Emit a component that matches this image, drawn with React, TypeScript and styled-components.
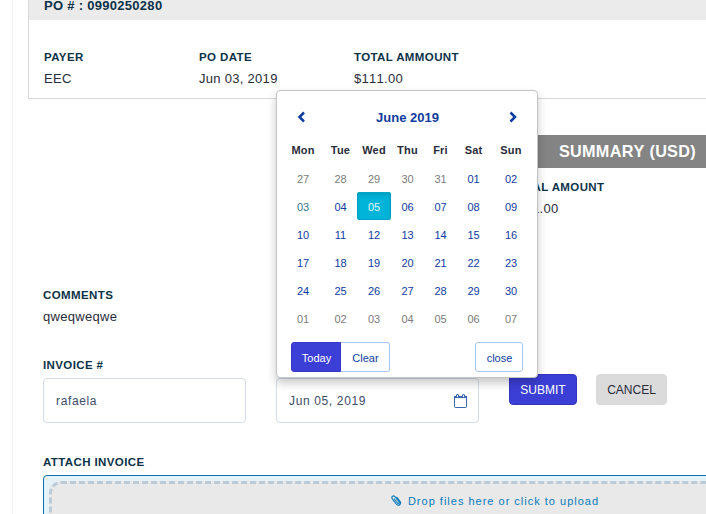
import React from 'react';
import styled, { createGlobalStyle } from 'styled-components';

const GlobalStyle = createGlobalStyle`
  * { box-sizing: border-box; }
  body {
    margin: 0;
    overflow: hidden;
    background: #fff;
    font-family: "Liberation Sans", Arial, sans-serif;
    font-size: 13px;
    color: #292b3a;
  }
  button, input { font-family: inherit; }
`;

const Page = styled.div`
  display: flex;
  width: 706px;
  height: 514px;
  overflow: hidden;
`;

const Gutter = styled.div`
  flex: 0 0 13px;
  border-right: 1px solid #f4f4f4;
  background: #fff;
`;

const Content = styled.main`
  flex: 0 0 950px;
  padding-left: 15px;
`;

const OrderPanel = styled.section`
  height: 99px;
  border: 1px solid #d9d9d9;
  border-top: 0;
`;

const OrderHeader = styled.header`
  height: 20px;
  padding-left: 15px;
  background: #ebebeb;
  color: #0c3249;
  font-size: 13px;
  font-weight: bold;
  line-height: 11px;
  letter-spacing: 0.29px;
`;

const OrderFields = styled.div`
  display: flex;
  padding: 29px 0 0 15px;
`;

const Field = styled.div<{ $width?: number }>`
  width: ${(p) => (p.$width ? `${p.$width}px` : 'auto')};
`;

const Label = styled.div`
  color: #0c3249;
  font-size: 11.5px;
  font-weight: bold;
  line-height: 16px;
  letter-spacing: 0.39px;
  white-space: nowrap;
`;

const Value = styled.div`
  margin-top: 5px;
  font-size: 13px;
  font-kerning: none;
  line-height: 17px;
  letter-spacing: 0.29px;
`;

const SummaryBlock = styled.section`
  height: 152px;
  margin: 36px 0 0 480px;
`;

const SummaryTitle = styled.h2`
  height: 33px;
  margin: 0 0 11px;
  padding-left: 51px;
  background: #848484;
  color: #fff;
  font-size: 16.25px;
  font-kerning: none;
  line-height: 33px;
  letter-spacing: 0.25px;
`;

const SummaryField = styled(Field)`
  padding-left: 1.5px;
`;

const Comments = styled.section`
  height: 70px;
  padding-left: 15px;
`;

const FormRow = styled.form`
  display: flex;
  gap: 30px;
  height: 97px;
  padding-left: 15px;
`;

const FormField = styled.div`
  position: relative;
  width: 203px;
`;

const InputBox = styled.div`
  display: flex;
  align-items: center;
  justify-content: space-between;
  height: 45px;
  margin-top: 5px;
  padding: 0 11px 0 12px;
  border: 1px solid #d3dce8;
  border-radius: 4px;
  background: #fff;
`;

const Input = styled.input`
  width: 130px;
  padding: 0;
  border: 0;
  outline: 0;
  background: transparent;
  color: #3e4b66;
  font-size: 12px;
  letter-spacing: 0.64px;
`;

const Actions = styled.div`
  display: flex;
  align-items: flex-start;
  gap: 19px;
  padding-top: 17px;
`;

const ActionButton = styled.button<{ $primary?: boolean }>`
  width: ${(p) => (p.$primary ? 68 : 71)}px;
  height: 31px;
  padding: 0;
  border: 1px solid ${(p) => (p.$primary ? '#3336bd' : '#d8d8d8')};
  border-radius: 4px;
  background: ${(p) => (p.$primary ? '#3b3fd5' : '#dbdbdb')};
  color: ${(p) => (p.$primary ? '#fff' : '#292b3a')};
  font-size: 12px;
`;

const Popup = styled.div`
  position: absolute;
  left: 0;
  bottom: 76px;
  z-index: 2;
  width: 262px;
  height: 288px;
  padding: 12px 5px 0;
  border: 1px solid #c4c4c4;
  border-radius: 4px;
  background: #fff;
  box-shadow: 0 5px 10px rgba(0, 0, 0, 0.22);
`;

const MonthBar = styled.div`
  display: flex;
  align-items: center;
  justify-content: space-between;
  height: 28px;
  padding: 0 14px 0 15px;
  color: #0f3ba1;
`;

const MonthName = styled.strong`
  font-size: 13px;
`;

const Days = styled.div`
  display: grid;
  grid-template-columns: 42px 33px 34px 33px 33px 33px 42px;
  padding-top: 5px;
  text-align: center;
`;

const Weekday = styled.div`
  height: 28px;
  font-size: 11px;
  font-weight: bold;
  line-height: 29px;
  letter-spacing: 0.2px;
`;

type DayKind = 'normal' | 'muted' | 'marked' | 'selected';

const dayColor: Record<DayKind, string> = {
  normal: '#0f3ba1',
  muted: '#7c7c7c',
  marked: '#30768c',
  selected: '#e4faff',
};

const Day = styled.div<{ $kind: DayKind }>`
  height: 28px;
  border-radius: 3px;
  color: ${(p) => dayColor[p.$kind]};
  font-size: 11px;
  line-height: 30px;
  ${(p) =>
    p.$kind === 'selected' &&
    'background: #00b3d8; box-shadow: inset 0 0 0 1px #00a3c4, inset 0 3px 4px rgba(0, 0, 0, 0.12);'}
`;

const PopupFooter = styled.div`
  display: flex;
  justify-content: space-between;
  padding: 10px 9px 0;
`;

const ButtonGroup = styled.div`
  display: flex;
`;

const PopupButton = styled.button<{ $width: number; $shape: 'start' | 'end' | 'single' }>`
  width: ${(p) => p.$width}px;
  height: 30px;
  padding: 2px 0 0 1px;
  border: 1px solid ${(p) => (p.$shape === 'start' ? '#3639c8' : '#a9c6f5')};
  border-left-width: ${(p) => (p.$shape === 'end' ? 0 : 1)}px;
  border-radius: ${(p) => ({ start: '3px 0 0 3px', end: '0 3px 3px 0', single: '3px' })[p.$shape]};
  background: ${(p) => (p.$shape === 'start' ? '#3b3fd5' : '#fff')};
  color: ${(p) => (p.$shape === 'start' ? '#fff' : '#0f3ba1')};
  font-size: 11px;
`;

const Attach = styled.section`
  width: 919px;
  padding-left: 15px;
`;

const DropFrame = styled.div`
  height: 120px;
  margin-top: 5px;
  padding: 5px;
  border: 1px solid #0872b5;
  border-radius: 4px;
  background: #e6f1f8;
`;

const DropArea = styled.div`
  display: flex;
  justify-content: center;
  gap: 6px;
  height: 108px;
  padding-top: 9px;
  border: 3px dashed #bccbd8;
  border-radius: 12px;
  background: #e9e9e9;
  color: #087bbb;
  font-size: 11px;
  line-height: 16px;
  letter-spacing: 1px;
`;

const ClipIcon = styled.svg`
  margin-top: 2px;
`;

const Chevron = ({ d }: { d: string }) => (
  <svg width="10" height="12" viewBox="0 0 10 12" fill="none" stroke="currentColor" strokeWidth="2.5">
    <path d={d} />
  </svg>
);

const CalendarIcon = () => (
  <svg width="13" height="14" viewBox="0 0 13 14" fill="none" stroke="#3867ad">
    <path d="M.5 3v9.7q0 .8.8.8h10.4q.8 0 .8-.8V3" />
    <path d="M0 3h13" strokeWidth="2.2" />
    <path d="M2.5 3.5V1q0-.5.5-.5h1q.5 0 .5.5v2.5zM8.5 3.5V1q0-.5.5-.5h1q.5 0 .5.5v2.5z" fill="#fff" />
  </svg>
);

const weekdays = ['Mon', 'Tue', 'Wed', 'Thu', 'Fri', 'Sat', 'Sun'];

// Six weeks starting on Monday, May 27.
const days = Array.from({ length: 42 }, (_, i) => {
  const number = i < 5 ? i + 27 : i < 35 ? i - 4 : i - 34;
  const kind: DayKind =
    i < 5 || i >= 35 ? 'muted' : number === 5 ? 'selected' : number === 3 ? 'marked' : 'normal';
  return { text: String(number).padStart(2, '0'), kind };
});

const DatePopup = () => (
  <Popup>
    <MonthBar>
      <Chevron d="M7 1.5 2.5 6l4.5 4.5" />
      <MonthName>June 2019</MonthName>
      <Chevron d="M2.5 1.5 7 6l-4.5 4.5" />
    </MonthBar>
    <Days>
      {weekdays.map((day) => (
        <Weekday key={day}>{day}</Weekday>
      ))}
      {days.map((day, i) => (
        <Day key={i} $kind={day.kind}>
          {day.text}
        </Day>
      ))}
    </Days>
    <PopupFooter>
      <ButtonGroup>
        <PopupButton type="button" $width={50} $shape="start">Today</PopupButton>
        <PopupButton type="button" $width={49} $shape="end">Clear</PopupButton>
      </ButtonGroup>
      <PopupButton type="button" $width={48} $shape="single">close</PopupButton>
    </PopupFooter>
  </Popup>
);

export default function App() {
  return (
    <>
      <GlobalStyle />
      <Page>
        <Gutter />
        <Content>
          <OrderPanel>
            <OrderHeader>PO # : 0990250280</OrderHeader>
            <OrderFields>
              <Field $width={155}>
                <Label>PAYER</Label>
                <Value>EEC</Value>
              </Field>
              <Field $width={155}>
                <Label>PO DATE</Label>
                <Value>Jun 03, 2019</Value>
              </Field>
              <Field>
                <Label>TOTAL AMMOUNT</Label>
                <Value>$111.00</Value>
              </Field>
            </OrderFields>
          </OrderPanel>
          <SummaryBlock>
            <SummaryTitle>SUMMARY (USD)</SummaryTitle>
            <SummaryField>
              <Label>TOTAL AMOUNT</Label>
              <Value>$111.00</Value>
            </SummaryField>
          </SummaryBlock>
          <Comments>
            <Label>COMMENTS</Label>
            <Value>qweqweqwe</Value>
          </Comments>
          <FormRow>
            <FormField>
              <Label>INVOICE #</Label>
              <InputBox>
                <Input defaultValue="rafaela" />
              </InputBox>
            </FormField>
            <FormField>
              <Label>INVOICE DATE</Label>
              <InputBox>
                <Input defaultValue="Jun 05, 2019" />
                <CalendarIcon />
              </InputBox>
              <DatePopup />
            </FormField>
            <Actions>
              <ActionButton type="button" $primary>SUBMIT</ActionButton>
              <ActionButton type="button">CANCEL</ActionButton>
            </Actions>
          </FormRow>
          <Attach>
            <Label>ATTACH INVOICE</Label>
            <DropFrame>
              <DropArea>
                <ClipIcon width="11" height="11" viewBox="0 0 11 11" fill="none" stroke="currentColor" strokeWidth="1.1">
                  <path d="M3 3.6 6.6 8q.9.9 1.5.4t0-1.5L4.6 2.3Q2.9.1 1.5 1.2T1.6 4.4l3.6 4.4q2 2.2 3.6.9t.2-3.4L5.6 2" />
                </ClipIcon>
                Drop files here or click to upload
              </DropArea>
            </DropFrame>
          </Attach>
        </Content>
      </Page>
    </>
  );
}
